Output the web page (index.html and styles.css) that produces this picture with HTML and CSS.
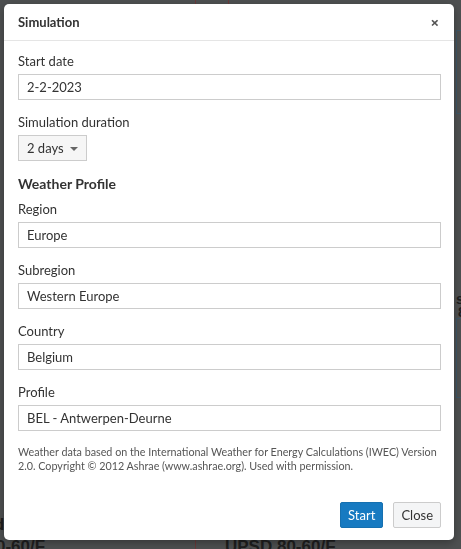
FILE: index.html
```html
<!DOCTYPE html>
<html lang="en">
<head>
<meta charset="utf-8">
<title>Simulation</title>
<link rel="stylesheet" href="styles.css">
</head>
<body>
<div class="canvas">
  <div class="wire wire-a"></div>
  <div class="wire wire-b"></div>
  <div class="node node-1"></div>
  <div class="node node-2"><span>s</span><span>8</span></div>
  <div class="node node-3"></div>
  <div class="node-label label-left">0-60/F</div>
  <div class="node-label label-mid">UPSD 80-60/F</div>
  <div class="node-label label-d">d</div>
</div>

<div class="modal" role="dialog">
  <div class="modal-header">
    <h4 class="modal-title">Simulation</h4>
    <button class="close" type="button">&times;</button>
  </div>
  <div class="modal-body">
    <div class="field">
      <label class="field-label">Start date</label>
      <input class="field-input" type="text" value="2-2-2023">
    </div>
    <div class="field">
      <label class="field-label">Simulation duration</label>
      <button class="dropdown" type="button">2 days <span class="caret"></span></button>
    </div>
    <h5 class="section-title">Weather Profile</h5>
    <div class="field">
      <label class="field-label">Region</label>
      <input class="field-input" type="text" value="Europe">
    </div>
    <div class="field">
      <label class="field-label">Subregion</label>
      <input class="field-input" type="text" value="Western Europe">
    </div>
    <div class="field">
      <label class="field-label">Country</label>
      <input class="field-input" type="text" value="Belgium">
    </div>
    <div class="field">
      <label class="field-label">Profile</label>
      <input class="field-input" type="text" value="BEL - Antwerpen-Deurne">
    </div>
    <p class="note">Weather data based on the International Weather for Energy Calculations (IWEC) Version 2.0. Copyright &copy; 2012 Ashrae (www.ashrae.org). Used with permission.</p>
  </div>
  <div class="modal-footer">
    <button class="btn btn-primary" type="button">Start</button>
    <button class="btn btn-default" type="button">Close</button>
  </div>
</div>
</body>
</html>
```

FILE: styles.css
```css
* { box-sizing: border-box; }

html, body {
  margin: 0;
  padding: 0;
  width: 461px;
  height: 549px;
  overflow: hidden;
}

body {
  background: #4e5051;
  font-family: "Lato", "Open Sans", sans-serif;
  color: #333;
}

/* background diagram (dimmed) */
.canvas {
  position: relative;
  width: 461px;
  height: 549px;
}
.wire {
  position: absolute;
  width: 1px;
  background: #6a3b3b;
}
.wire-a { left: 195px; top: 0; height: 549px; }
.wire-b { left: 228px; top: 0; height: 6px; }
.node {
  position: absolute;
  border: 1px solid #3d5666;
}
.node-1 { left: 456px; top: 30px; width: 20px; height: 84px; }
.node-2 { left: 456px; top: 185px; width: 20px; height: 80px; border: 0; }
.node-2 span {
  position: absolute;
  left: 0;
  font: bold 14px "Liberation Sans", sans-serif;
  color: #1e1e1e;
}
.node-2 span:first-child { top: 106px; }
.node-2 span:last-child { top: 119px; left: 2px; }
.node-3 { left: 456px; top: 318px; width: 20px; height: 80px; }
.node-label {
  position: absolute;
  font: bold 17px "Liberation Sans", sans-serif;
  color: #1f1f1f;
}
.label-left { left: -4px; top: 537px; }
.label-mid { left: 225px; top: 537px; }
.label-d { left: -6px; top: 515px; }

/* modal */
.modal {
  position: fixed;
  left: 4px;
  top: 4px;
  width: 450px;
  height: 536px;
  background: #fff;
  border-radius: 5px;
  display: flex;
  flex-direction: column;
  box-shadow: 0 3px 9px rgba(0,0,0,0.3);
}

.modal-header {
  height: 37px;
  display: flex;
  align-items: center;
  justify-content: space-between;
  padding: 0 14px;
  border-bottom: 1px solid #e5e5e5;
}
.modal-title {
  margin: 0;
  font-size: 13px;
  font-weight: 700;
  color: #333;
}
.close {
  border: 0;
  background: none;
  padding: 0;
  font-family: "Open Sans", sans-serif;
  font-size: 15px;
  font-weight: 700;
  line-height: 1;
  color: #555;
  margin-right: 1px;
}

.modal-body {
  padding: 11px 13px 0 14px;
  flex: 1;
}

.field {
  display: flex;
  flex-direction: column;
  align-items: flex-start;
  margin-bottom: 13px;
}
.field-label {
  font-size: 13px;
  line-height: 18px;
  margin-bottom: 4px;
  color: #333;
}
.field-input {
  width: 100%;
  height: 26px;
  border: 1px solid #ccc;
  border-radius: 0;
  padding: 0 8px;
  font-family: inherit;
  font-size: 13px;
  color: #333;
  background: #fff;
}

.dropdown {
  height: 26px;
  padding: 0 8px;
  border: 1px solid #ccc;
  background: #f6f6f6;
  font-family: inherit;
  font-size: 13px;
  color: #333;
  display: flex;
  align-items: center;
  gap: 6px;
}
.caret {
  width: 0;
  height: 0;
  border-left: 4px solid transparent;
  border-right: 4px solid transparent;
  border-top: 4px solid #666;
  margin-top: 1px;
}

.section-title {
  margin: 0 0 6px;
  font-size: 14px;
  line-height: 20px;
  font-weight: 700;
  color: #333;
}

.note {
  margin: 14px 0 0;
  font-size: 10.75px;
  line-height: 14px;
  color: #555;
}

.modal-footer {
  display: flex;
  justify-content: flex-end;
  gap: 10px;
  padding: 0 13px 12px;
}
.btn {
  height: 26px;
  padding: 0 7px;
  font-family: inherit;
  font-size: 13px;
  border: 1px solid transparent;
  border-radius: 2px;
}
.btn-primary {
  background: #177ac1;
  border-color: #1670b0;
  color: #fff;
}
.btn-default {
  background: #f4f5f6;
  border-color: #ccc;
  color: #333;
}
```
